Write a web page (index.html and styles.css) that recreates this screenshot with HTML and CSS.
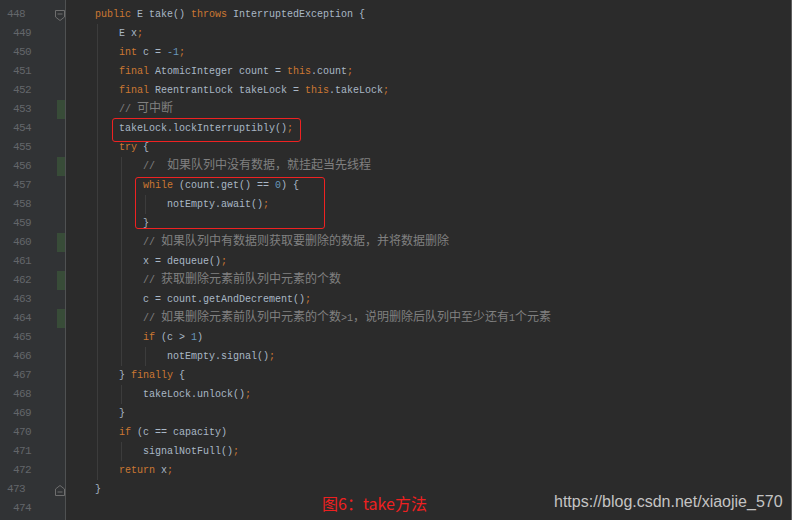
FILE: index.html
```html
<!DOCTYPE html>
<html>
<head>
<meta charset="utf-8">
<link rel="stylesheet" href="styles.css">
</head>
<body>
<div class="editor">
  <div class="gutter">
    <div class="gr"><span class="n">448</span><span class="chg"></span><svg class="fold" width="10" height="11" viewBox="0 0 10 11"><path d="M0.5 0.5H9.5V7L5 10.5L0.5 7Z M2.5 4H7.5" fill="#313335" stroke="#6e6e6e"/></svg></div>
    <div class="gr"><span class="n">449</span><span class="chg"></span></div>
    <div class="gr"><span class="n">450</span><span class="chg"></span></div>
    <div class="gr"><span class="n">451</span><span class="chg"></span></div>
    <div class="gr"><span class="n">452</span><span class="chg"></span></div>
    <div class="gr"><span class="n">453</span><span class="chg on"></span></div>
    <div class="gr"><span class="n">454</span><span class="chg"></span></div>
    <div class="gr"><span class="n">455</span><span class="chg"></span></div>
    <div class="gr"><span class="n">456</span><span class="chg on"></span></div>
    <div class="gr"><span class="n">457</span><span class="chg"></span></div>
    <div class="gr"><span class="n">458</span><span class="chg"></span></div>
    <div class="gr"><span class="n">459</span><span class="chg"></span></div>
    <div class="gr"><span class="n">460</span><span class="chg on"></span></div>
    <div class="gr"><span class="n">461</span><span class="chg"></span></div>
    <div class="gr"><span class="n">462</span><span class="chg on"></span></div>
    <div class="gr"><span class="n">463</span><span class="chg"></span></div>
    <div class="gr"><span class="n">464</span><span class="chg on"></span></div>
    <div class="gr"><span class="n">465</span><span class="chg"></span></div>
    <div class="gr"><span class="n">466</span><span class="chg"></span></div>
    <div class="gr"><span class="n">467</span><span class="chg"></span></div>
    <div class="gr"><span class="n">468</span><span class="chg"></span></div>
    <div class="gr"><span class="n">469</span><span class="chg"></span></div>
    <div class="gr"><span class="n">470</span><span class="chg"></span></div>
    <div class="gr"><span class="n">471</span><span class="chg"></span></div>
    <div class="gr"><span class="n">472</span><span class="chg"></span></div>
    <div class="gr"><span class="n">473</span><span class="chg"></span><svg class="fold" width="10" height="11" viewBox="0 0 10 11"><path d="M5 0.5L9.5 4V10.5H0.5V4Z M2.5 7H7.5" fill="#313335" stroke="#6e6e6e"/></svg></div>
    <div class="gr"><span class="n">474</span><span class="chg"></span></div>
  </div>
  <div class="code">
<div class="line"><span class="k">public</span> E take() <span class="k">throws</span> InterruptedException {</div>
<div class="line"><span class="i g"></span>E x<span class="k">;</span></div>
<div class="line"><span class="i g"></span><span class="k">int</span> c = <span class="nu">-1</span><span class="k">;</span></div>
<div class="line"><span class="i g"></span><span class="k">final</span> AtomicInteger count = <span class="k">this</span>.count<span class="k">;</span></div>
<div class="line"><span class="i g"></span><span class="k">final</span> ReentrantLock takeLock = <span class="k">this</span>.takeLock<span class="k">;</span></div>
<div class="line"><span class="i g"></span><span class="c">// <span class="z">可中断</span></span></div>
<div class="line"><span class="i g"></span>takeLock.lockInterruptibly()<span class="k">;</span></div>
<div class="line"><span class="i g"></span><span class="k">try</span> {</div>
<div class="line"><span class="i g"></span><span class="i g"></span><span class="c">//  <span class="z">如果队列中没有数据，就挂起当先线程</span></span></div>
<div class="line"><span class="i g"></span><span class="i g"></span><span class="k">while</span> (count.get() == <span class="nu">0</span>) {</div>
<div class="line"><span class="i g"></span><span class="i g"></span><span class="i g"></span>notEmpty.await()<span class="k">;</span></div>
<div class="line"><span class="i g"></span><span class="i g"></span>}</div>
<div class="line"><span class="i g"></span><span class="i g"></span><span class="c">// <span class="z">如果队列中有数据则获取要删除的数据，并将数据删除</span></span></div>
<div class="line"><span class="i g"></span><span class="i g"></span>x = dequeue()<span class="k">;</span></div>
<div class="line"><span class="i g"></span><span class="i g"></span><span class="c">// <span class="z">获取删除元素前队列中元素的个数</span></span></div>
<div class="line"><span class="i g"></span><span class="i g"></span>c = count.getAndDecrement()<span class="k">;</span></div>
<div class="line"><span class="i g"></span><span class="i g"></span><span class="c">// <span class="z">如果删除元素前队列中元素的个数</span>&gt;1<span class="z">，说明删除后队列中至少还有</span>1<span class="z">个元素</span></span></div>
<div class="line"><span class="i g"></span><span class="i g"></span><span class="k">if</span> (c &gt; <span class="nu">1</span>)</div>
<div class="line"><span class="i g"></span><span class="i g"></span><span class="i g"></span>notEmpty.signal()<span class="k">;</span></div>
<div class="line"><span class="i g"></span>} <span class="k">finally</span> {</div>
<div class="line"><span class="i g"></span><span class="i g"></span>takeLock.unlock()<span class="k">;</span></div>
<div class="line"><span class="i g"></span>}</div>
<div class="line"><span class="i g"></span><span class="k">if</span> (c == capacity)</div>
<div class="line"><span class="i g"></span><span class="i g"></span>signalNotFull()<span class="k">;</span></div>
<div class="line"><span class="i g"></span><span class="k">return</span> x<span class="k">;</span></div>
<div class="line"><span class="brace">}</span></div>
<div class="line"></div>
    <div class="mark mark1"></div>
    <div class="mark mark2"></div>
  </div>
  <div class="caption">图6：take方法</div>
  <div class="url">https://blog.csdn.net/xiaojie_570</div>
</div>
</body>
</html>
```

FILE: styles.css
```css
html, body {
  margin: 0;
  padding: 0;
  background: #2b2b2b;
}
.editor {
  position: relative;
  display: flex;
  width: 792px;
  height: 520px;
  box-sizing: border-box;
  background: #2b2b2b;
  border-right: 1px solid #5e5e5e;
  overflow: hidden;
}
.gutter {
  width: 65px;
  flex: none;
  padding-top: 5px;
  background: #313335;
  border-right: 1px solid #4f5152;
}
.gr {
  display: flex;
  align-items: center;
  height: 19px;
}
.n {
  width: 31px;
  text-align: right;
  color: #63666a;
  font: 11px/19px "Liberation Mono", monospace;
  letter-spacing: -0.6px;
}
.chg {
  width: 8px;
  height: 19px;
  margin-left: 26px;
  flex: none;
}
.chg.on {
  background: #384c38;
}
.fold {
  flex: none;
  margin-left: -4px;
  margin-top: 1px;
}
.code {
  position: relative;
  flex: 1;
  padding-top: 5px;
  padding-left: 29px;
  font: 10px/19px "Liberation Mono", monospace;
  color: #a9b7c6;
}
.line {
  height: 19px;
  line-height: 19px;
  white-space: pre;
}
.i {
  display: inline-block;
  width: 24px;
  height: 19px;
  vertical-align: top;
}
.i.g {
  background: linear-gradient(#3c3c3c, #3c3c3c) 2px 0 / 1px 100% no-repeat;
}
.k { color: #cc7832; }
.c { color: #808080; }
.nu { color: #6897bb; }
.z {
  font-family: "Noto Sans CJK SC", sans-serif;
  font-size: 12px;
  line-height: 14px;
}
.brace { color: #a9b7c6; }
.mark {
  position: absolute;
  border: 1.5px solid #ee2222;
  border-radius: 3px;
  box-sizing: border-box;
}
.mark1 {
  left: 46px;
  top: 118px;
  width: 189px;
  height: 24px;
}
.mark2 {
  left: 69px;
  top: 177px;
  width: 190px;
  height: 52px;
}
.caption {
  position: absolute;
  left: 322px;
  top: 493px;
  font: 16px/20px "Noto Sans CJK SC", sans-serif;
  color: #ee2020;
}
.url {
  position: absolute;
  left: 554px;
  top: 492px;
  font: 16px/20px "Liberation Sans", sans-serif;
  color: #c4c4c4;
}
```
